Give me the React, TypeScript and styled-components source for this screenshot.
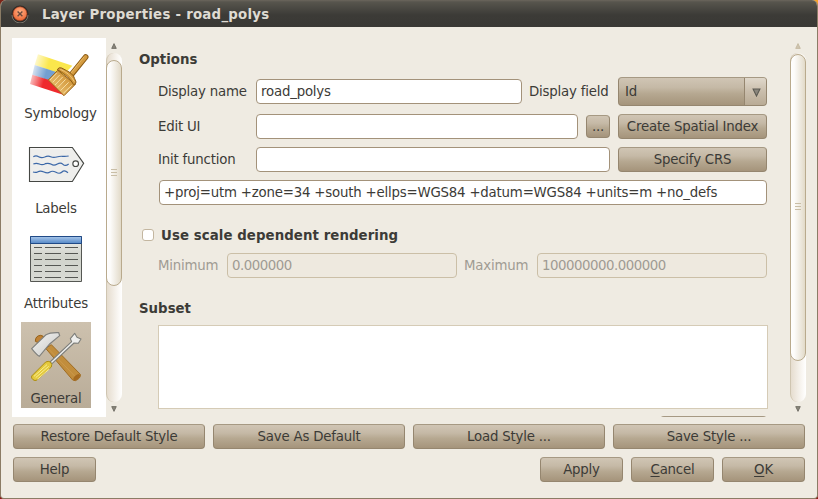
import React from "react";
import styled, { createGlobalStyle, css } from "styled-components";

const Global = createGlobalStyle`
  * { box-sizing: border-box; }
  body {
    margin: 0;
    overflow: hidden;
    font: 13.33px/16px "DejaVu Sans", sans-serif;
    letter-spacing: -0.2px;
    color: #3c3b37;
    background: conic-gradient(#f5a32c 0 25%, #8f1414 0 75%, #7c2418 0);
  }
`;

const Window = styled.div`
  width: 818px;
  height: 499px;
  display: flex;
  flex-direction: column;
  background: #efebe2;
  border: solid #8b7c65;
  border-width: 0 1px 1px;
  border-radius: 6px 6px 4px 4px;
  overflow: hidden;
`;

const TitleBar = styled.header`
  flex: none;
  height: 27px;
  display: flex;
  align-items: center;
  gap: 13px;
  padding: 1px 0 0 10px;
  background: linear-gradient(#6b665c 0, #57554d 2px, #3c3b37 15px, #3a3935);
  color: #dfdbd2;
  font-weight: bold;
  letter-spacing: 0.25px;
  white-space: pre;
`;

const TitleText = styled.span`
  padding-top: 1px;
`;

const Body = styled.div`
  flex: none;
  display: flex;
  height: 379px;
  margin: 11px 11px 0;
`;

const IconList = styled.nav`
  width: 94px;
  height: 379px;
  padding: 0 0 0 9px;
  background: #fff;
`;

const Item = styled.div<{ $selected?: boolean; $wide?: boolean }>`
  width: ${(p) => (p.$wide ? 79 : 70)}px;
  height: ${(p) => (p.$selected ? 86 : 95)}px;
  margin-top: ${(p) => (p.$selected ? -1 : 0)}px;
  padding-top: ${(p) => (p.$selected ? 1 : 0)}px;
  display: flex;
  flex-direction: column;
  align-items: flex-start;
  background: ${(p) => (p.$selected ? "linear-gradient(#cdc1ae, #b9ac98)" : "none")};
  & > svg { display: block; flex: none; }
`;

const ItemLabel = styled.span`
  align-self: center;
  padding-top: 1px;
  white-space: pre;
`;

const ScrollColumn = styled.div`
  flex: none;
  width: 16px;
  height: 379px;
  display: flex;
  flex-direction: column;
  align-items: center;
  gap: 4px;
  padding-top: 5px;
`;

const Track = styled.div<{ $start: number }>`
  flex: none;
  width: 16px;
  height: 349px;
  padding-top: ${(p) => p.$start}px;
  border-left: 1px solid #cfc5b1;
  border-radius: 8px;
  background: linear-gradient(90deg, #e6ddcf, #fbf9f6 80%, #fff);
`;

const Thumb = styled.div<{ $length: number }>`
  width: 16px;
  margin-left: -1px;
  height: ${(p) => p.$length}px;
  display: flex;
  align-items: center;
  justify-content: center;
  border: 1px solid #b9aa8d;
  border-radius: 8px;
  background: linear-gradient(90deg, #fff 0, #fcfbf9 25%, #e9e3d6 80%, #e2dac8);
`;

const Grip = styled.i`
  width: 6px;
  height: 7px;
  margin-bottom: 2px;
  background: repeating-linear-gradient(#c9bea6 0 1px, transparent 1px 3px);
`;

const Panel = styled.main`
  width: 668px;
  height: 379px;
  padding: 0 23px 0 17px;
  overflow: hidden;
`;

const Heading = styled.h2<{ $top: number; $bottom: number; $spacing?: number }>`
  display: flex;
  align-items: center;
  gap: 7px;
  height: 16px;
  margin: ${(p) => p.$top}px 0 ${(p) => p.$bottom}px;
  font-size: 13.33px;
  letter-spacing: ${(p) => p.$spacing ?? 0}px;
  white-space: pre;
`;

const CheckBox = styled.i`
  width: 12px;
  height: 12px;
  margin: 0 0 2px 3px;
  border: 1px solid #c3b6a0;
  border-radius: 3px;
  background: #fff;
`;

const Row = styled.div<{ $height?: number }>`
  display: flex;
  align-items: center;
  height: ${(p) => p.$height ?? 25}px;
  margin: 0 0 8px 19px;
`;

const Label = styled.label<{ $width: number; $indent?: boolean; $disabled?: boolean }>`
  flex: none;
  width: ${(p) => p.$width}px;
  padding-left: ${(p) => (p.$indent ? 7 : 0)}px;
  white-space: pre;
  color: ${(p) => (p.$disabled ? "#9f9b93" : "inherit")};
`;

const Field = styled.div<{ $width: number; $disabled?: boolean }>`
  flex: none;
  width: ${(p) => p.$width}px;
  height: 25px;
  padding: 4px 4px 3px;
  border: 1px solid #a3927a;
  border-radius: 4px;
  background: #fff;
  white-space: pre;
  ${(p) =>
    p.$disabled &&
    css`
      border-color: #cbbfa7;
      background: #eee9df;
      color: #9f9b93;
      letter-spacing: -0.48px;
    `}
`;

const raised = css`
  border: 1px solid #95866f;
  border-top-color: #a69983;
  border-radius: 4px;
  background: linear-gradient(#d0c5b4, #c5b9a6 35%, #b6a891 58%, #a5947b);
`;

const Button = styled.button<{ $width: number; $height?: number; $gap?: number }>`
  flex: none;
  width: ${(p) => p.$width}px;
  height: ${(p) => p.$height ?? 25}px;
  margin: 0 0 0 ${(p) => p.$gap ?? 8}px;
  padding: 0;
  font: inherit;
  letter-spacing: inherit;
  color: inherit;
  white-space: pre;
  text-align: center;
  ${raised}
  u { text-underline-offset: 2px; text-decoration-thickness: 1px; }
`;

const Combo = styled.div`
  flex: none;
  width: 149px;
  height: 29px;
  display: flex;
  align-items: center;
  justify-content: space-between;
  padding-left: 6px;
  ${raised}
  overflow: hidden;
`;

const ComboArrow = styled.span`
  width: 22px;
  height: 27px;
  display: flex;
  align-items: center;
  justify-content: center;
  padding: 2px 0 0 2px;
  border-left: 1px solid #95866f;
  background: linear-gradient(#e0d8cb, #c9bdab 50%, #b9ab95);
`;

const TextArea = styled.div`
  width: 610px;
  height: 84px;
  margin: 0 0 7px 19px;
  border: 1px solid #d5cbb6;
  background: #fff;
`;

const ButtonRow = styled.footer<{ $top: number }>`
  flex: none;
  display: flex;
  height: 25px;
  margin: ${(p) => p.$top}px 12px 0 12px;
`;

const Spacer = styled.span`
  flex: 1;
`;

const Arrow = ({ up, faint, size = 6 }: { up?: boolean; faint?: boolean; size?: number }) => (
  <svg width={size} height={size} viewBox="0 0 6 6">
    <path
      d={up ? "M3 .6 5.3 5.4H.7Z" : "M.7 .6H5.3L3 5.4Z"}
      fill={faint ? "#cfc5b1" : "#8a867c"}
      stroke={faint ? "#bfb297" : "#5c5a52"}
      strokeWidth=".7"
    />
  </svg>
);

const ScrollBar = ({ start, length, faintUp }: { start: number; length: number; faintUp?: boolean }) => (
  <ScrollColumn>
    <Arrow up faint={faintUp} />
    <Track $start={start}>
      <Thumb $length={length}><Grip /></Thumb>
    </Track>
    <Arrow />
  </ScrollColumn>
);

const CloseIcon = () => (
  <svg width="18" height="18" viewBox="0 0 18 18">
    <defs>
      <radialGradient id="close" cx="50%" cy="35%" r="65%">
        <stop offset="0" stopColor="#ffae80" />
        <stop offset=".6" stopColor="#f58556" />
        <stop offset="1" stopColor="#e4622f" />
      </radialGradient>
    </defs>
    <circle cx="9" cy="9" r="8.5" fill="#2c2b28" />
    <path d="M1 10a8 8 0 0 0 16 0" fill="none" stroke="#77736a" />
    <circle cx="9" cy="8.8" r="7" fill="url(#close)" stroke="#9d3a1c" strokeWidth=".6" />
    <path d="m6.6 6.4 4.8 4.8m0-4.8-4.8 4.8" stroke="#6b4a3c" strokeWidth="1.4" />
  </svg>
);

const BrushIcon = () => (
  <svg width="70" height="67" viewBox="63 114 210 201">
    <defs>
      <linearGradient id="fade" x1="90" x2="140" y1="200" y2="214" gradientUnits="userSpaceOnUse">
        <stop stopColor="#000" />
        <stop offset=".2" stopColor="#444" />
        <stop offset="1" stopColor="#fff" />
      </linearGradient>
      <mask id="fadeMask" maskUnits="userSpaceOnUse" x="80" y="150" width="150" height="150">
        <path d="M80 150H230V300H80Z" fill="url(#fade)" />
      </mask>
      <linearGradient id="bristle" x1="160" y1="265" x2="218" y2="215" gradientUnits="userSpaceOnUse">
        <stop stopColor="#e9bc69" />
        <stop offset="1" stopColor="#c98a2c" />
      </linearGradient>
    </defs>
    <g mask="url(#fadeMask)">
      <path d="M114 163 217 197 190 225 104 195Z" fill="#fbe74c" />
      <path d="M104 195 178 219 150 243 97 224Z" fill="#739fd0" />
      <path d="M97 224 150 241 194 286 90 252Z" fill="#ef2a2d" />
    </g>
    <path d="M214 224 257 171" stroke="#8c5c15" strokeWidth="17" strokeLinecap="round" />
    <path d="M211 227 257 171" stroke="#d49b40" strokeWidth="11" strokeLinecap="round" />
    <path d="M214 218 252 171" stroke="#e6b865" strokeWidth="3" strokeLinecap="round" />
    <path d="M173 211 145 240 192 287 226 253Z" fill="url(#bristle)" stroke="#9b6518" strokeWidth="3" />
    <path d="m170 219-20 21m29-15-21 22m30-16-23 24m32-17-24 25m33-16-25 25m34-16-25 24" stroke="#f6dca0" strokeWidth="3" />
    <path d="M173 207q4-6 12-3l15 8q7 3 14 9 8 7 10 15l4 10q0 7-7 8-14-25-44-42-6-2-4-5Z" fill="#d49a3d" stroke="#8c5c15" strokeWidth="3" />
    <path d="M181 208q28 11 42 37" fill="none" stroke="#f0c675" strokeWidth="3" />
  </svg>
);

const LabelIcon = () => (
  <svg width="70" height="67" viewBox="63 39 210 201">
    <path d="M88.5 82.5H217L251 130 217 184.5H88.5Z" fill="#eeeeec" stroke="#454743" strokeWidth="3.3" />
    <path d="M92 86H215" stroke="#fff" strokeWidth="2" />
    <circle cx="227" cy="131" r="8.5" fill="#fff" stroke="#454743" strokeWidth="3.4" />
    <g fill="none" stroke="#3c68a8" strokeWidth="3.6">
      <path d="M100 110q8-5 16 0t18 1q10-5 18-1t18 1 18-2 18-1" />
      <path d="M100 132q9-4 18 0t18-1q10-3 18 2t18-1 17 1 17-1" />
      <path d="M99 156q8 3 15-1t18 1 18 0 18 1 18-1 18 2" />
    </g>
  </svg>
);

const TableIcon = () => (
  <svg width="70" height="67" viewBox="0 0 70 67">
    <defs>
      <linearGradient id="sheet" x2="0" y2="1"><stop stopColor="#eeeeec" /><stop offset=".45" stopColor="#d0d3cb" /><stop offset="1" stopColor="#d9dbd5" /></linearGradient>
      <linearGradient id="band" x2="0" y2="1"><stop stopColor="#a9c7ea" /><stop offset="1" stopColor="#5488c7" /></linearGradient>
    </defs>
    <path d="M9.5 8.5h51v45h-51z" fill="url(#sheet)" stroke="#555753" />
    <path d="M9.5 8.5h51v7h-51z" fill="url(#band)" stroke="#204a87" />
    {[19.5, 25.5, 31.5, 37.5, 43.5, 49.5].map((y) => (
      <path key={y} d={`M13 ${y}h8m3 0h16m4 0h13`} stroke="#555753" />
    ))}
  </svg>
);

const ToolsIcon = () => (
  <svg width="70" height="67" viewBox="63 21 210 201">
    <defs>
      <linearGradient id="steel" x1="0" y1="0" x2="1" y2="1"><stop stopColor="#f7f7f5" /><stop offset="1" stopColor="#c5c5c3" /></linearGradient>
    </defs>
    <path d="M106 76q0-17 16-18 10 1 12 11l-15 13Z" fill="#c08234" stroke="#946019" strokeWidth="3" />
    <path d="M137 97 154 86 241 175Q243 187 226 194L218 192Z" fill="#c18d3c" stroke="#a06c22" strokeWidth="3" />
    <path d="M146 99 224 180" stroke="#cb984b" strokeWidth="3" />
    <ellipse cx="230" cy="184" rx="12" ry="6" transform="rotate(-43 230 184)" fill="#a56a20" />
    <path d="M95 98 137 57Q150 49 176 50L179 59 149 84 118 121Q111 118 95 98Z" fill="url(#steel)" stroke="#80817e" strokeWidth="3.5" />
    <path d="M150 138 215 77 211 68 224 52 231 64 243 69 235 82 222 81 156 143Z" fill="#eeeeec" stroke="#7c7d79" strokeWidth="3.2" strokeLinejoin="round" />
    <path d="M95 180 137 138q8-4 14 0 7 7 3 15L111 192q-6 4-12-1-6-4-4-11Z" fill="#e4c93d" stroke="#ad8e14" strokeWidth="3" />
    <path d="m102 181 39-35m-34 39 39-34m-34 39 36-31" stroke="#fbf092" strokeWidth="3" />
  </svg>
);

export default function App() {
  return (
    <>
      <Global />
      <Window>
        <TitleBar>
          <CloseIcon />
          <TitleText>Layer Properties - road_polys</TitleText>
        </TitleBar>
        <Body>
          <IconList>
            <Item $wide><BrushIcon /><ItemLabel>Symbology</ItemLabel></Item>
            <Item><LabelIcon /><ItemLabel>Labels</ItemLabel></Item>
            <Item><TableIcon /><ItemLabel>Attributes</ItemLabel></Item>
            <Item $selected><ToolsIcon /><ItemLabel>General</ItemLabel></Item>
          </IconList>
          <ScrollBar start={7} length={226} />
          <Panel>
            <Heading $top={14} $bottom={9}>Options</Heading>
            <Row $height={29}>
              <Label $width={98}>Display name</Label>
              <Field $width={266}>road_polys</Field>
              <Label $width={96} $indent>Display field</Label>
              <Combo>Id<ComboArrow><Arrow size={9} /></ComboArrow></Combo>
            </Row>
            <Row>
              <Label $width={98}>Edit UI</Label>
              <Field $width={322} />
              <Button $width={24} $height={23}>...</Button>
              <Button $width={149}>Create Spatial Index</Button>
            </Row>
            <Row>
              <Label $width={98}>Init function</Label>
              <Field $width={354} />
              <Button $width={149}>Specify CRS</Button>
            </Row>
            <Row>
              <Label $width={1} />
              <Field $width={608}>+proj=utm +zone=34 +south +ellps=WGS84 +datum=WGS84 +units=m +no_defs</Field>
            </Row>
            <Heading $top={23} $bottom={9} $spacing={0.07}><CheckBox />Use scale dependent rendering</Heading>
            <Row>
              <Label $width={69} $disabled>Minimum</Label>
              <Field $width={230} $disabled>0.000000</Field>
              <Label $width={80} $indent $disabled>Maximum</Label>
              <Field $width={230} $disabled>100000000.000000</Field>
            </Row>
            <Heading $top={23} $bottom={8}>Subset</Heading>
            <TextArea />
            <Row>
              <Spacer />
              <Button $width={107} />
            </Row>
          </Panel>
          <ScrollBar start={1} length={307} faintUp />
        </Body>
        <ButtonRow $top={7}>
          <Button $width={192} $gap={0}>Restore Default Style</Button>
          <Button $width={192}>Save As Default</Button>
          <Button $width={192}>Load Style ...</Button>
          <Button $width={192}>Save Style ...</Button>
        </ButtonRow>
        <ButtonRow $top={8}>
          <Button $width={83} $gap={0}>Help</Button>
          <Spacer />
          <Button $width={83}>Apply</Button>
          <Button $width={83}><u>C</u>ancel</Button>
          <Button $width={83}><u>O</u>K</Button>
        </ButtonRow>
      </Window>
    </>
  );
}
